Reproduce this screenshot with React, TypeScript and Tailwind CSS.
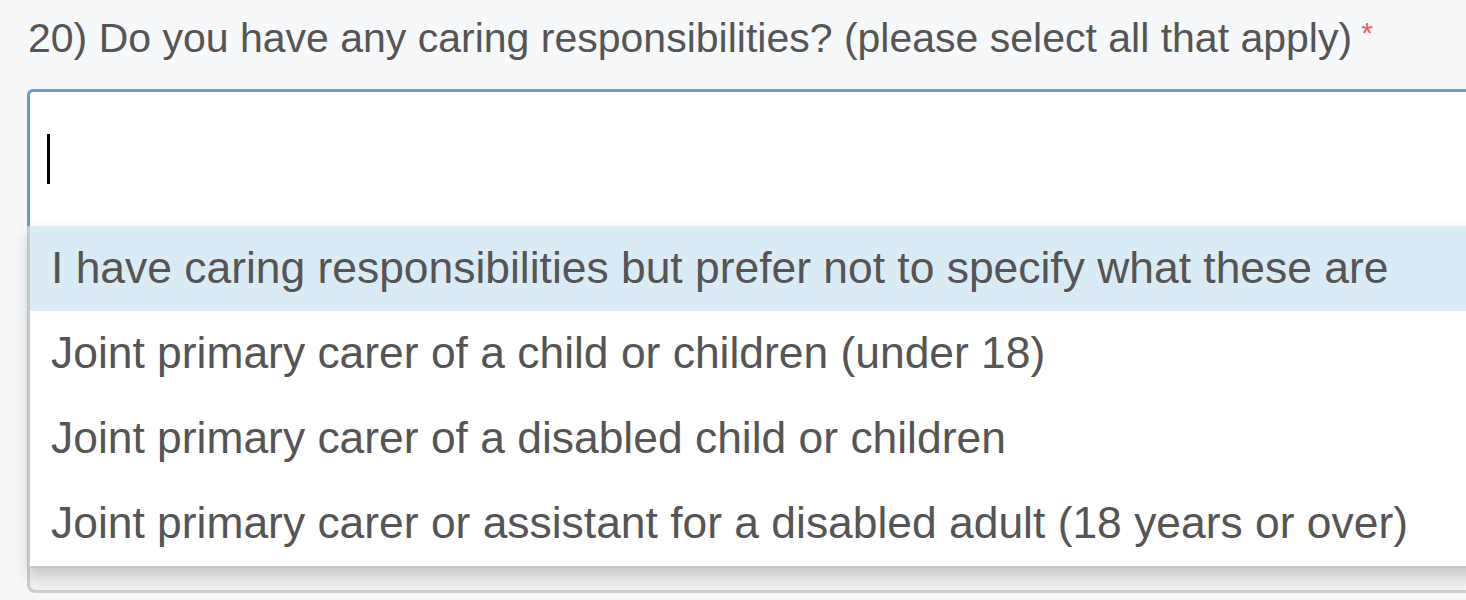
export default function App() {
  const options = [
    "I have caring responsibilities but prefer not to specify what these are",
    "Joint primary carer of a child or children (under 18)",
    "Joint primary carer of a disabled child or children",
    "Joint primary carer or assistant for a disabled adult (18 years or over)",
  ];

  return (
    <div
      className="h-[600px] w-[1466px] overflow-hidden bg-[#f6f8fa] text-[#555]"
      style={{ fontFamily: "'Liberation Sans', Arial, sans-serif" }}
    >
      <div className="pl-[28px] pt-[13px] text-[41px] leading-[51px] whitespace-nowrap">
        20) Do you have any caring responsibilities? (please select all that apply)
        <span className="relative top-[-9px] ml-[9px] text-[30px] text-[#ee5a6e]">*</span>
      </div>

      <div className="relative ml-[27px] mt-[22px] w-[1460px]">
        {/* search input */}
        <div className="h-[137px] rounded-tl-[6px] border-l-[3px] border-t-[3px] border-[#6b9bc8] bg-white pl-[17px] pt-[42px]">
          <div className="h-[50px] w-[3px] bg-black" />
        </div>

        {/* field underneath the menu */}
        <div className="h-[367px] rounded-bl-[8px] border-b-[3px] border-l-[3px] border-[#cfcfcf] bg-gradient-to-b from-[#d8d8d8] to-[#f2f2f2]" />

        {/* dropdown menu */}
        <ul className="absolute left-[1px] right-0 top-[137px] border-b-[2px] border-l-[2px] border-[#c8c8c8] bg-white shadow-[0_8px_14px_rgba(0,0,0,0.18)]">
          {options.map((o, i) => (
            <li
              key={o}
              className={
                "flex h-[85px] items-center whitespace-nowrap pl-[21px] text-[44.4px] " +
                (i === 0 ? "bg-[#d9ebf5]" : "bg-white")
              }
            >
              {o}
            </li>
          ))}
        </ul>
      </div>
    </div>
  );
}
